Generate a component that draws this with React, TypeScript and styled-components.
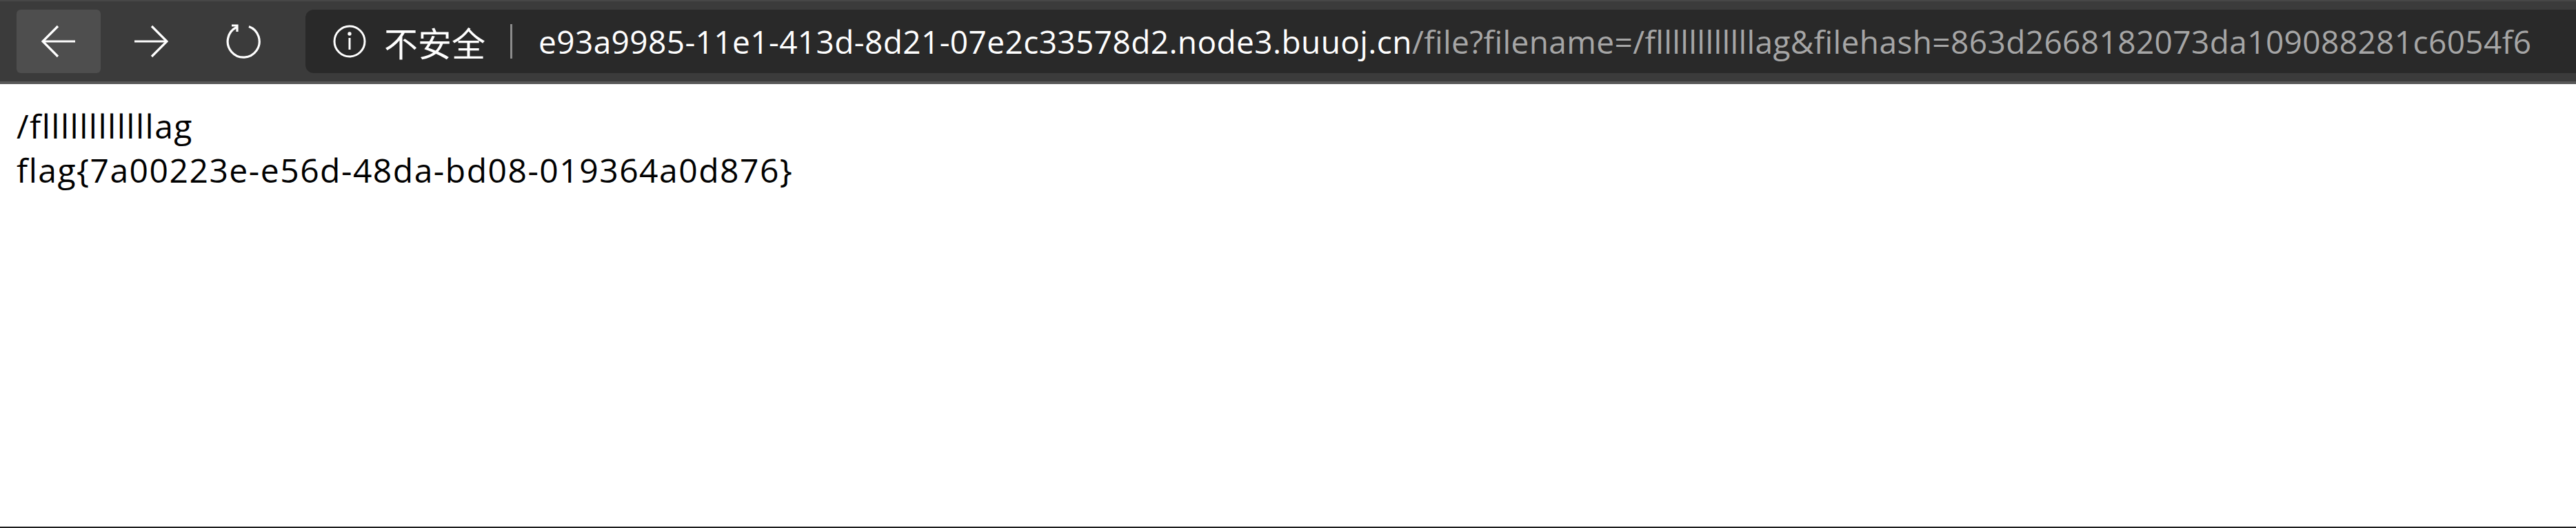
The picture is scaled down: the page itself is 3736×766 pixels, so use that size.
import styled, { createGlobalStyle } from 'styled-components';

const host = 'e93a9985-11e1-413d-8d21-07e2c33578d2.node3.buuoj.cn';
const path = '/file?filename=/fllllllllllllag&filehash=863d2668182073da109088281c6054f6';

const GlobalStyle = createGlobalStyle`
  html, body {
    margin: 0;
    padding: 0;
    background: #ffffff;
  }
`;

const App = () => {
  return (
    <Page>
      <GlobalStyle />
      <Toolbar>
        <NavButton active aria-label="back">
          <svg width="50" height="48" viewBox="0 0 50 48" fill="none" stroke="#fff" strokeWidth="3.2">
            <path d="M2 24 H49" />
            <path d="M24 2 L2 24 L24 46" />
          </svg>
        </NavButton>
        <NavButton aria-label="forward">
          <svg width="50" height="48" viewBox="0 0 50 48" fill="none" stroke="#fff" strokeWidth="3.2">
            <path d="M1 24 H48" />
            <path d="M26 2 L48 24 L26 46" />
          </svg>
        </NavButton>
        <NavButton aria-label="reload">
          <svg width="54" height="54" viewBox="0 0 54 54" fill="none" stroke="#fff" strokeWidth="3.2">
            <path d="M17 6.5 A23 23 0 1 0 35 5.5" />
            <path d="M10 4 H18 V13" />
          </svg>
        </NavButton>
        <AddressBar>
          <InfoIcon>
            <svg width="48" height="48" viewBox="0 0 48 48" fill="none" stroke="#fff" strokeWidth="3">
              <circle cx="24" cy="24" r="22" />
              <path d="M24 19 V36" />
              <circle cx="24" cy="13" r="1.2" fill="#fff" />
            </svg>
          </InfoIcon>
          <Security>不安全</Security>
          <Divider />
          <Url>
            <Host>{host}</Host>
            <UrlPath>{path}</UrlPath>
          </Url>
        </AddressBar>
      </Toolbar>
      <Content>
        <Line>/fllllllllllllag</Line>
        <Line>flag{'{'}7a00223e-e56d-48da-bd08-019364a0d876{'}'}</Line>
      </Content>
    </Page>
  );
};

export default App;

const Page = styled.div`
  height: 766px;
  box-sizing: border-box;
  border-bottom: 2px solid #1e1e1e;
  display: flex;
  flex-direction: column;
  overflow: hidden;
`;

const Toolbar = styled.header`
  height: 122px;
  box-sizing: border-box;
  background: #3b3b3b;
  border-top: 2px solid #474747;
  border-bottom: 4px solid #585858;
  display: flex;
  align-items: center;
  padding-left: 24px;
  flex-shrink: 0;
`;

const NavButton = styled.div<{ active?: boolean }>`
  width: 122px;
  height: 92px;
  margin-right: 12px;
  border-radius: 6px;
  background: ${({ active }) => (active ? '#4e4e4e' : 'transparent')};
  display: flex;
  align-items: center;
  justify-content: center;
`;

const AddressBar = styled.div`
  flex: 1;
  height: 92px;
  margin-left: 17px;
  background: #292929;
  border-radius: 12px 0 0 12px;
  display: flex;
  align-items: center;
  padding-left: 40px;
  overflow: hidden;
  font-family: 'Open Sans', 'Noto Sans', 'Noto Sans CJK SC', sans-serif;
`;

const InfoIcon = styled.span`
  display: flex;
  margin-right: 26px;
`;

const Security = styled.span`
  color: #ffffff;
  font-family: 'Noto Sans CJK SC', sans-serif;
  font-size: 49px;
  line-height: 1;
`;

const Divider = styled.span`
  width: 3px;
  height: 50px;
  background: #8c8c8c;
  margin: 0 38px 0 36px;
`;

const Url = styled.span`
  font-size: 46px;
  white-space: nowrap;
  letter-spacing: 0.4px;
`;

const Host = styled.span`
  color: #ffffff;
`;

const UrlPath = styled.span`
  color: #a6a6a6;
`;

const Content = styled.main`
  padding: 29px 24px 24px;
  font-family: 'Open Sans', 'Noto Sans', sans-serif;
  font-size: 48px;
  line-height: 64px;
  letter-spacing: 1.5px;
  color: #000000;
`;

const Line = styled.div`
  white-space: nowrap;
`;
